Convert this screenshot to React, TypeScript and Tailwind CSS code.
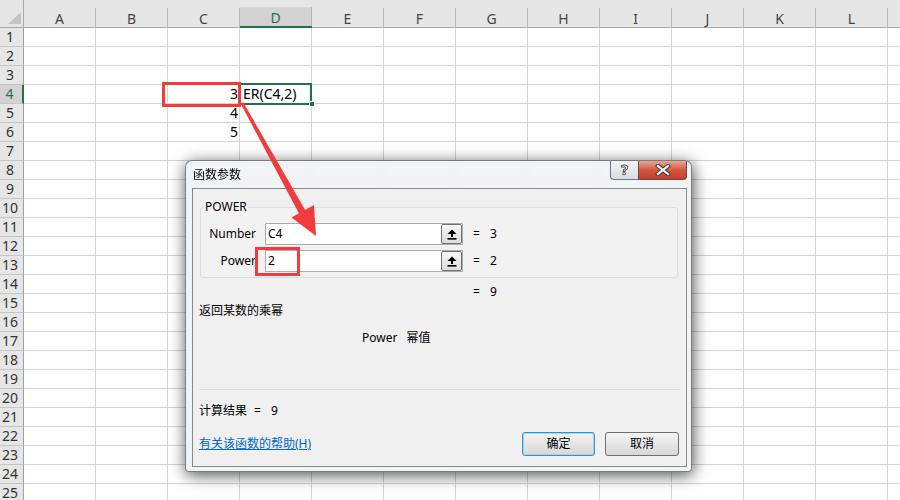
import React from "react";

const COLS = ["A", "B", "C", "D", "E", "F", "G", "H", "I", "J", "K", "L", "M"];
const ROWS = Array.from({ length: 25 }, (_, i) => i + 1);

const CELLS: Record<string, string> = {
  "C4": "3",
  "D4": "ER(C4,2)",
  "C5": "4",
  "C6": "5",
};

function UpIcon() {
  return (
    <svg width="10" height="11" viewBox="0 0 10 11">
      <polygon points="5,0.5 9.5,5 0.5,5" fill="#000" />
      <rect x="4" y="4.5" width="2" height="3.5" fill="#000" />
      <rect x="0.5" y="9" width="9" height="1.6" fill="#000" />
    </svg>
  );
}

function RefButton() {
  return (
    <div className="w-[21px] h-[20px] shrink-0 border border-[#707070] rounded-[2px] bg-gradient-to-b from-[#f7f7f7] to-[#dcdcdc] flex items-center justify-center">
      <UpIcon />
    </div>
  );
}

function ArgRow({ label, value, result }: { label: string; value: string; result: string }) {
  return (
    <div className="flex items-center h-[22px] text-[12px] leading-[16px]">
      <div className="w-[55px] text-right">{label}</div>
      <div className="ml-[9px] w-[198px] h-[22px] border border-[#abadb3] bg-white flex items-center justify-between">
        <span className="pl-[2px]">{value}</span>
        <RefButton />
      </div>
      <span className="ml-[10px]">=</span>
      <span className="ml-[10px]">{result}</span>
    </div>
  );
}

export default function App() {
  return (
    <div className="relative w-[900px] h-[500px] overflow-hidden bg-white font-['Noto_Sans','Noto_Sans_CJK_SC',sans-serif] text-black">
      {/* Spreadsheet grid */}
      <div className="flex flex-col">
        <div className="flex h-[28px]">
          <div className="w-[24px] h-[28px] shrink-0 bg-[#e6e6e6] border-b border-r border-[#ababab] flex items-end justify-end pr-[1px] pb-[2px]">
            <svg width="14" height="13" viewBox="0 0 14 13">
              <polygon points="13,0 13,12 0,12" fill="#c4c4c4" />
            </svg>
          </div>
          {COLS.map((c) => (
            <div
              key={c}
              className={`w-[72px] h-[28px] shrink-0 flex flex-col bg-[#e6e6e6] ${
                c === "D" ? "border-b-2 border-[#217346]" : "border-b border-[#ababab]"
              }`}
            >
              <div className="h-[8px]" />
              <div
                className={`flex-1 border-r border-[#b5b5b5] flex items-center justify-center pt-[3px] text-[14px] leading-[16px] ${
                  c === "D" ? "bg-[#d3d3d3] text-[#217346]" : "text-[#444]"
                }`}
              >
                {c}
              </div>
            </div>
          ))}
        </div>
        {ROWS.map((r) => (
          <div key={r} className="flex h-[19px]">
            <div
              className={`w-[24px] h-[19px] shrink-0 border-b border-[#c6c6c6] flex items-center justify-center pr-[3px] text-[14px] leading-[16px] ${
                r === 4
                  ? "bg-[#d3d3d3] text-[#217346] border-r-2 border-r-[#217346]"
                  : "bg-[#e6e6e6] text-[#333] border-r border-r-[#9f9f9f]"
              }`}
            >
              {r}
            </div>
            {COLS.map((c) => {
              const v = CELLS[c + r];
              const isNum = v !== undefined && /^\d+$/.test(v);
              return (
                <div
                  key={c}
                  className={`w-[72px] h-[19px] shrink-0 border-r border-b border-[#d4d4d4] flex items-center text-[14px] leading-[16px] ${
                    isNum ? "justify-end pr-[1px]" : "justify-start pl-[3px]"
                  }`}
                >
                  {v}
                </div>
              );
            })}
          </div>
        ))}
      </div>

      {/* Active cell D4 */}
      <div className="absolute left-[238px] top-[83px] w-[74px] h-[22px] border-2 border-[#217346]" />
      <div className="absolute left-[309px] top-[101px] w-[6px] h-[6px] bg-[#217346] border border-white" />

      {/* Dialog */}
      <div className="absolute left-[185px] top-[160px] w-[507px] h-[312px] rounded-t-[7px] rounded-b-[4px] border border-[#4a4a4a]/70 bg-[#eef1f5]/80 backdrop-blur-[3px] shadow-[1px_3px_16px_rgba(0,0,0,0.7)] flex flex-col">
        <div className="h-[27px] flex items-start justify-between">
          <div className="ml-[7px] mt-[6px] text-[12px] leading-[16px]">函数参数</div>
          <div className="flex mr-[4px]">
            <div className="w-[28px] h-[19px] border border-t-0 border-r-0 border-[#6b7785] rounded-bl-[4px] bg-gradient-to-b from-[#f3f5f8] to-[#d7dce2] flex items-center justify-center">
              <span className="text-[14px] leading-[14px] font-bold text-white [-webkit-text-stroke:1px_#555]">?</span>
            </div>
            <div className="w-[49px] h-[19px] border border-t-0 border-[#6b4a44] rounded-br-[4px] bg-gradient-to-b from-[#e9a898] via-[#d4553f] to-[#c43f2c] flex items-center justify-center">
              <svg width="16" height="12" viewBox="0 0 16 12">
                <path d="M3,2 L13,10 M13,2 L3,10" stroke="#3d3d3d" strokeWidth="4.2" strokeLinecap="square" />
                <path d="M3,2 L13,10 M13,2 L3,10" stroke="#ffffff" strokeWidth="2.2" strokeLinecap="square" />
              </svg>
            </div>
          </div>
        </div>
        <div className="ml-[6px] w-[495px] h-[279px] border border-[#8a8a8a] bg-[#f0f0f0] flex flex-col text-[12px] leading-[16px]">
          <fieldset className="ml-[7px] mt-[10px] w-[478px] border border-[#d5dfe5] rounded-[3px] bg-[#f2f2f2]">
            <legend className="ml-[3px] px-[1px] text-[12px] leading-[16px]">POWER</legend>
            <div className="pt-[8px] pb-[5px] flex flex-col gap-[5px]">
              <ArgRow label="Number" value="C4" result="3" />
              <ArgRow label="Power" value="2" result="2" />
            </div>
          </fieldset>
          <div className="mt-[6px] h-[16px] flex">
            <span className="ml-[280px]">=</span>
            <span className="ml-[10px]">9</span>
          </div>
          <div className="mt-[3px] h-[16px] ml-[6px]">返回某数的乘幂</div>
          <div className="mt-[11px] h-[16px] flex">
            <span className="ml-[169px]">Power</span>
            <span className="ml-[9px]">幂值</span>
          </div>
          <div className="mt-[43px] ml-[6px] w-[481px] h-[1px] bg-[#d5dfe5]" />
          <div className="mt-[13px] h-[16px] flex ml-[6px]">
            <span>计算结果</span>
            <span className="ml-[7px]">=</span>
            <span className="ml-[10px]">9</span>
          </div>
          <div className="mt-[13px] h-[24px] flex items-center">
            <span className="ml-[6px] text-[#0066cc] underline">有关该函数的帮助(H)</span>
            <div className="ml-auto flex gap-[10px] mr-[7px]">
              <div className="w-[73px] h-[24px] border border-[#3c8dc8] rounded-[3px] shadow-[inset_0_0_0_1px_#9fd6f6] bg-gradient-to-b from-[#f4f4f4] to-[#d8d8d8] flex items-center justify-center">
                确定
              </div>
              <div className="w-[74px] h-[24px] border border-[#707070] rounded-[3px] bg-gradient-to-b from-[#f4f4f4] to-[#d8d8d8] flex items-center justify-center">
                取消
              </div>
            </div>
          </div>
        </div>
      </div>

      {/* Annotations */}
      <svg className="absolute left-0 top-0 pointer-events-none" width="900" height="500" viewBox="0 0 900 500">
        <rect x="163.5" y="83.5" width="76" height="22" fill="none" stroke="#f03c3c" strokeWidth="3" />
        <rect x="256.5" y="248.5" width="42" height="26" fill="none" stroke="#f03c3c" strokeWidth="3" />
        <polygon points="243.3,102.3 240.7,103.7 299.4,214.2 305.6,210.8" fill="#f03c3c" />
        <polygon points="316,236 314,205 291.5,217.5" fill="#f03c3c" />
      </svg>
    </div>
  );
}
